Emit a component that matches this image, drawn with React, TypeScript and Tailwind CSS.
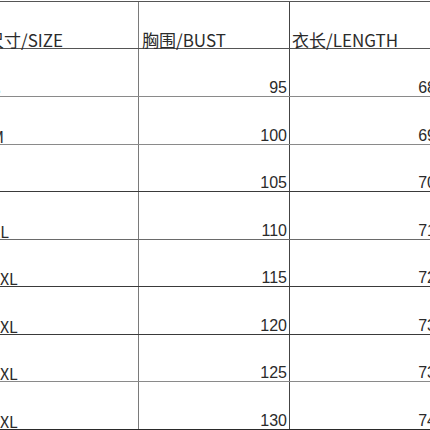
const rows = [
  { size: "S", bust: 95, length: 68, h: "h-[48px]", line: "border-[#8a8a8a]" },
  { size: "M", bust: 100, length: 69, h: "h-[48px]", line: "border-[#8a8a8a]" },
  { size: "L", bust: 105, length: 70, h: "h-[47px]", line: "border-[#3a3a3a]" },
  { size: "XL", bust: 110, length: 71, h: "h-[48px]", line: "border-[#6a6a6a]" },
  { size: "2XL", bust: 115, length: 72, h: "h-[47px]", line: "border-[#3a3a3a]" },
  { size: "3XL", bust: 120, length: 73, h: "h-[48px]", line: "border-[#3a3a3a]" },
  { size: "4XL", bust: 125, length: 73, h: "h-[47px]", line: "border-[#8a8a8a]" },
  { size: "5XL", bust: 130, length: 74, h: "h-[48px]", line: "border-[#2a2a2a]" },
];

export default function App() {
  return (
    <div className="h-[430px] w-[430px] overflow-hidden bg-white text-[#2b2b2b] [font-family:'Noto_Sans_CJK_SC','Noto_Sans',sans-serif]">
      <div className="-ml-[20px] mt-[1px] w-[460px] border-t border-[#555]">
        <div className="grid h-[47px] grid-cols-[159px_151px_151px] border-b border-[#555] text-[17px] leading-none">
          <div className="flex items-end border-r border-[#7a7a7a] pl-[7px]">尺寸/SIZE</div>
          <div className="flex items-end border-r border-[#444] pl-[3px]">胸围/BUST</div>
          <div className="flex items-end border-r border-[#444] pl-[2px]">衣长/LENGTH</div>
        </div>
        {rows.map((r) => (
          <div
            key={r.size}
            className={`grid grid-cols-[159px_151px_151px] border-b text-[16px] leading-none ${r.h} ${r.line}`}
          >
            <div className="flex items-end border-r border-[#7a7a7a] pl-[11px]">{r.size}</div>
            <div className="flex items-end justify-end border-r border-[#444] pr-[2px] [font-family:'Liberation_Sans',Arial,sans-serif]">
              {r.bust}
            </div>
            <div className="flex items-end justify-end border-r border-[#444] pr-[4px] [font-family:'Liberation_Sans',Arial,sans-serif]">
              {r.length}
            </div>
          </div>
        ))}
      </div>
    </div>
  );
}
